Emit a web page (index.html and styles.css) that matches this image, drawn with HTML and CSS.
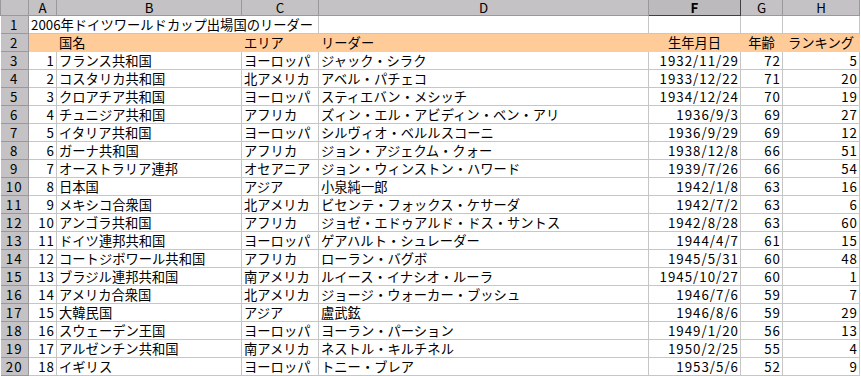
FILE: index.html
```html
<!DOCTYPE html>
<html lang="ja">
<head>
<meta charset="utf-8">
<title>2006年ドイツワールドカップ出場国のリーダー</title>
<link rel="stylesheet" href="styles.css">
</head>
<body>
<table class="sheet">
  <colgroup>
    <col class="w-rh"><col class="w-a"><col class="w-b"><col class="w-c"><col class="w-d"><col class="w-f"><col class="w-g"><col class="w-h">
  </colgroup>
  <thead>
    <tr class="colhead">
      <th class="corner"></th><th>A</th><th>B</th><th>C</th><th>D</th><th class="sel">F</th><th>G</th><th>H</th>
    </tr>
  </thead>
  <tbody>
    <tr><th class="rh">1</th><td class="txt title" colspan="3">2006年ドイツワールドカップ出場国のリーダー</td><td></td><td></td><td></td><td></td></tr>
    <tr class="hdr"><th class="rh">2</th><td></td><td class="txt">国名</td><td class="txt">エリア</td><td class="txt">リーダー</td><td class="ctr">生年月日</td><td class="ctr">年齢</td><td class="ctr">ランキング</td></tr>
    <tr><th class="rh">3</th><td class="num">1</td><td class="txt">フランス共和国</td><td class="txt">ヨーロッパ</td><td class="txt">ジャック・シラク</td><td class="num">1932/11/29</td><td class="num">72</td><td class="num">5</td></tr>
    <tr><th class="rh">4</th><td class="num">2</td><td class="txt">コスタリカ共和国</td><td class="txt">北アメリカ</td><td class="txt">アベル・パチェコ</td><td class="num">1933/12/22</td><td class="num">71</td><td class="num">20</td></tr>
    <tr><th class="rh">5</th><td class="num">3</td><td class="txt">クロアチア共和国</td><td class="txt">ヨーロッパ</td><td class="txt">スティエバン・メシッチ</td><td class="num">1934/12/24</td><td class="num">70</td><td class="num">19</td></tr>
    <tr><th class="rh">6</th><td class="num">4</td><td class="txt">チュニジア共和国</td><td class="txt">アフリカ</td><td class="txt">ズィン・エル・アビディン・ベン・アリ</td><td class="num">1936/9/3</td><td class="num">69</td><td class="num">27</td></tr>
    <tr><th class="rh">7</th><td class="num">5</td><td class="txt">イタリア共和国</td><td class="txt">ヨーロッパ</td><td class="txt">シルヴィオ・ベルルスコーニ</td><td class="num">1936/9/29</td><td class="num">69</td><td class="num">12</td></tr>
    <tr><th class="rh">8</th><td class="num">6</td><td class="txt">ガーナ共和国</td><td class="txt">アフリカ</td><td class="txt">ジョン・アジェクム・クォー</td><td class="num">1938/12/8</td><td class="num">66</td><td class="num">51</td></tr>
    <tr><th class="rh">9</th><td class="num">7</td><td class="txt">オーストラリア連邦</td><td class="txt">オセアニア</td><td class="txt">ジョン・ウィンストン・ハワード</td><td class="num">1939/7/26</td><td class="num">66</td><td class="num">54</td></tr>
    <tr><th class="rh">10</th><td class="num">8</td><td class="txt">日本国</td><td class="txt">アジア</td><td class="txt">小泉純一郎</td><td class="num">1942/1/8</td><td class="num">63</td><td class="num">16</td></tr>
    <tr><th class="rh">11</th><td class="num">9</td><td class="txt">メキシコ合衆国</td><td class="txt">北アメリカ</td><td class="txt">ビセンテ・フォックス・ケサーダ</td><td class="num">1942/7/2</td><td class="num">63</td><td class="num">6</td></tr>
    <tr><th class="rh">12</th><td class="num">10</td><td class="txt">アンゴラ共和国</td><td class="txt">アフリカ</td><td class="txt">ジョゼ・エドゥアルド・ドス・サントス</td><td class="num">1942/8/28</td><td class="num">63</td><td class="num">60</td></tr>
    <tr><th class="rh">13</th><td class="num">11</td><td class="txt">ドイツ連邦共和国</td><td class="txt">ヨーロッパ</td><td class="txt">ゲアハルト・シュレーダー</td><td class="num">1944/4/7</td><td class="num">61</td><td class="num">15</td></tr>
    <tr><th class="rh">14</th><td class="num">12</td><td class="txt">コートジボワール共和国</td><td class="txt">アフリカ</td><td class="txt">ローラン・バグボ</td><td class="num">1945/5/31</td><td class="num">60</td><td class="num">48</td></tr>
    <tr><th class="rh">15</th><td class="num">13</td><td class="txt">ブラジル連邦共和国</td><td class="txt">南アメリカ</td><td class="txt">ルイース・イナシオ・ルーラ</td><td class="num">1945/10/27</td><td class="num">60</td><td class="num">1</td></tr>
    <tr><th class="rh">16</th><td class="num">14</td><td class="txt">アメリカ合衆国</td><td class="txt">北アメリカ</td><td class="txt">ジョージ・ウォーカー・ブッシュ</td><td class="num">1946/7/6</td><td class="num">59</td><td class="num">7</td></tr>
    <tr><th class="rh">17</th><td class="num">15</td><td class="txt">大韓民国</td><td class="txt">アジア</td><td class="txt">盧武鉉</td><td class="num">1946/8/6</td><td class="num">59</td><td class="num">29</td></tr>
    <tr><th class="rh">18</th><td class="num">16</td><td class="txt">スウェーデン王国</td><td class="txt">ヨーロッパ</td><td class="txt">ヨーラン・パーション</td><td class="num">1949/1/20</td><td class="num">56</td><td class="num">13</td></tr>
    <tr><th class="rh">19</th><td class="num">17</td><td class="txt">アルゼンチン共和国</td><td class="txt">南アメリカ</td><td class="txt">ネストル・キルチネル</td><td class="num">1950/2/25</td><td class="num">55</td><td class="num">4</td></tr>
    <tr><th class="rh">20</th><td class="num">18</td><td class="txt">イギリス</td><td class="txt">ヨーロッパ</td><td class="txt">トニー・ブレア</td><td class="num">1953/5/6</td><td class="num">52</td><td class="num">9</td></tr>
  </tbody>
</table>
</body>
</html>
```

FILE: styles.css
```css
html, body {
  margin: 0;
  padding: 0;
  background: #ffffff;
}

.sheet {
  border-collapse: collapse;
  table-layout: fixed;
  width: 859px;
  font-family: "Noto Sans CJK JP", "Noto Sans", sans-serif;
  font-size: 13.3px;
  color: #000000;
}

.w-rh { width: 28px; }
.w-a { width: 28px; }
.w-b { width: 185px; }
.w-c { width: 77px; }
.w-d { width: 330px; }
.w-f { width: 92px; }
.w-g { width: 42px; }
.w-h { width: 77px; }

.sheet th,
.sheet td {
  padding: 0;
  height: 17px;
  line-height: 17px;
  white-space: nowrap;
  overflow: hidden;
  border: 1px solid #c6c6c6;
  vertical-align: bottom;
}

.sheet .colhead th {
  height: 15px;
  line-height: 15px;
  background: #c4c2c4;
  font-weight: normal;
  text-align: center;
  vertical-align: middle;
  overflow: visible;
  border-color: #9a989a;
  border-top: none;
}

.sheet .colhead .sel {
  font-weight: bold;
  border-left: 1px solid #404040;
  border-right: 1px solid #404040;
  border-bottom: 1px solid #404040;
  background: #bcbabc;
}

.sheet .rh {
  background: #c4c2c4;
  font-weight: normal;
  text-align: center;
  letter-spacing: 1px;
  border-color: #9a989a;
  border-left: none;
}

.txt {
  text-align: left;
  padding-left: 2px !important;
}

.num {
  text-align: right;
  letter-spacing: 1px;
  padding-right: 1px !important;
}

.ctr {
  text-align: center;
}

.hdr td {
  background: #ffcc99;
  border-color: #ffcc99;
}

.title {
  overflow: visible;
}
```
